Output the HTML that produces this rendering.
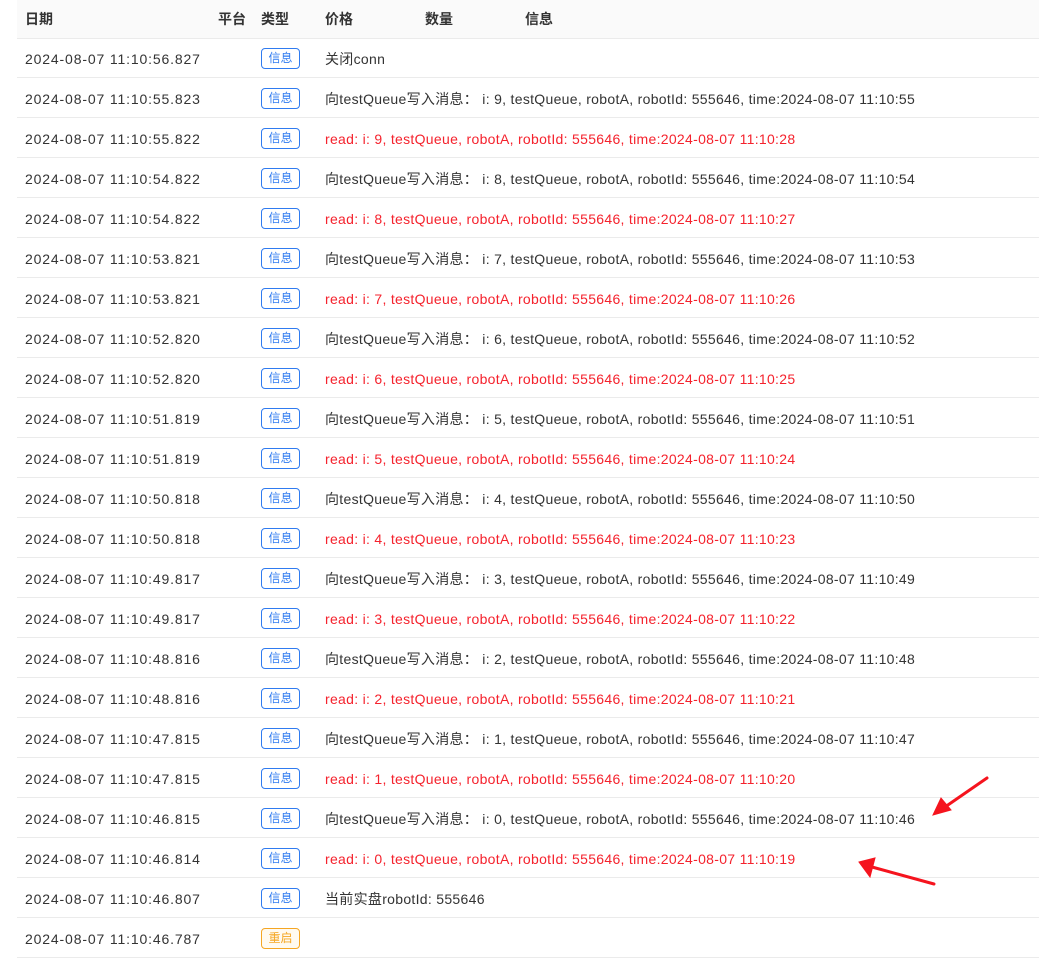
<!DOCTYPE html>
<html><head><meta charset="utf-8"><style>
body{margin:0;width:1039px;height:962px;background:#fff;font-family:"Liberation Sans","Noto Sans CJK SC",sans-serif;font-size:14px;color:#333;position:relative;overflow:hidden}
.hd{position:absolute;left:17px;top:0;width:1022px;height:38px;background:#fafafa;border-bottom:1px solid #ebebeb;font-weight:bold;color:#333}
.hd span{position:absolute;top:0;line-height:38px}
.row{position:absolute;left:17px;width:1022px;height:39px;border-bottom:1px solid #ebebeb}
.d{position:absolute;left:8px;top:2px;line-height:39px;height:39px;color:#333;letter-spacing:0.85px}
.t{position:absolute;left:244px;top:10px;width:37px;height:19px;border:1px solid #2f7bf0;border-radius:4px;color:#2f7bf0;font-size:12px;text-align:center;line-height:19px}
.t.o{border-color:#f5a623;color:#f5a623;background:#fffaf0}
.m{position:absolute;left:308px;top:2px;line-height:39px;height:39px;white-space:pre;letter-spacing:0.3px}
.r{color:#f5222d}
</style></head><body>
<div class="hd"><span style="left:8px">日期</span><span style="left:201px">平台</span><span style="left:244px">类型</span><span style="left:308px">价格</span><span style="left:408px">数量</span><span style="left:508px">信息</span></div>
<div class="row" style="top:38px"><span class="d">2024-08-07 11:10:56.827</span><span class="t">信息</span><span class="m">关闭conn</span></div>
<div class="row" style="top:78px"><span class="d">2024-08-07 11:10:55.823</span><span class="t">信息</span><span class="m">向testQueue写入消息： i: 9, testQueue, robotA, robotId: 555646, time:2024-08-07 11:10:55</span></div>
<div class="row" style="top:118px"><span class="d">2024-08-07 11:10:55.822</span><span class="t">信息</span><span class="m r">read: i: 9, testQueue, robotA, robotId: 555646, time:2024-08-07 11:10:28</span></div>
<div class="row" style="top:158px"><span class="d">2024-08-07 11:10:54.822</span><span class="t">信息</span><span class="m">向testQueue写入消息： i: 8, testQueue, robotA, robotId: 555646, time:2024-08-07 11:10:54</span></div>
<div class="row" style="top:198px"><span class="d">2024-08-07 11:10:54.822</span><span class="t">信息</span><span class="m r">read: i: 8, testQueue, robotA, robotId: 555646, time:2024-08-07 11:10:27</span></div>
<div class="row" style="top:238px"><span class="d">2024-08-07 11:10:53.821</span><span class="t">信息</span><span class="m">向testQueue写入消息： i: 7, testQueue, robotA, robotId: 555646, time:2024-08-07 11:10:53</span></div>
<div class="row" style="top:278px"><span class="d">2024-08-07 11:10:53.821</span><span class="t">信息</span><span class="m r">read: i: 7, testQueue, robotA, robotId: 555646, time:2024-08-07 11:10:26</span></div>
<div class="row" style="top:318px"><span class="d">2024-08-07 11:10:52.820</span><span class="t">信息</span><span class="m">向testQueue写入消息： i: 6, testQueue, robotA, robotId: 555646, time:2024-08-07 11:10:52</span></div>
<div class="row" style="top:358px"><span class="d">2024-08-07 11:10:52.820</span><span class="t">信息</span><span class="m r">read: i: 6, testQueue, robotA, robotId: 555646, time:2024-08-07 11:10:25</span></div>
<div class="row" style="top:398px"><span class="d">2024-08-07 11:10:51.819</span><span class="t">信息</span><span class="m">向testQueue写入消息： i: 5, testQueue, robotA, robotId: 555646, time:2024-08-07 11:10:51</span></div>
<div class="row" style="top:438px"><span class="d">2024-08-07 11:10:51.819</span><span class="t">信息</span><span class="m r">read: i: 5, testQueue, robotA, robotId: 555646, time:2024-08-07 11:10:24</span></div>
<div class="row" style="top:478px"><span class="d">2024-08-07 11:10:50.818</span><span class="t">信息</span><span class="m">向testQueue写入消息： i: 4, testQueue, robotA, robotId: 555646, time:2024-08-07 11:10:50</span></div>
<div class="row" style="top:518px"><span class="d">2024-08-07 11:10:50.818</span><span class="t">信息</span><span class="m r">read: i: 4, testQueue, robotA, robotId: 555646, time:2024-08-07 11:10:23</span></div>
<div class="row" style="top:558px"><span class="d">2024-08-07 11:10:49.817</span><span class="t">信息</span><span class="m">向testQueue写入消息： i: 3, testQueue, robotA, robotId: 555646, time:2024-08-07 11:10:49</span></div>
<div class="row" style="top:598px"><span class="d">2024-08-07 11:10:49.817</span><span class="t">信息</span><span class="m r">read: i: 3, testQueue, robotA, robotId: 555646, time:2024-08-07 11:10:22</span></div>
<div class="row" style="top:638px"><span class="d">2024-08-07 11:10:48.816</span><span class="t">信息</span><span class="m">向testQueue写入消息： i: 2, testQueue, robotA, robotId: 555646, time:2024-08-07 11:10:48</span></div>
<div class="row" style="top:678px"><span class="d">2024-08-07 11:10:48.816</span><span class="t">信息</span><span class="m r">read: i: 2, testQueue, robotA, robotId: 555646, time:2024-08-07 11:10:21</span></div>
<div class="row" style="top:718px"><span class="d">2024-08-07 11:10:47.815</span><span class="t">信息</span><span class="m">向testQueue写入消息： i: 1, testQueue, robotA, robotId: 555646, time:2024-08-07 11:10:47</span></div>
<div class="row" style="top:758px"><span class="d">2024-08-07 11:10:47.815</span><span class="t">信息</span><span class="m r">read: i: 1, testQueue, robotA, robotId: 555646, time:2024-08-07 11:10:20</span></div>
<div class="row" style="top:798px"><span class="d">2024-08-07 11:10:46.815</span><span class="t">信息</span><span class="m">向testQueue写入消息： i: 0, testQueue, robotA, robotId: 555646, time:2024-08-07 11:10:46</span></div>
<div class="row" style="top:838px"><span class="d">2024-08-07 11:10:46.814</span><span class="t">信息</span><span class="m r">read: i: 0, testQueue, robotA, robotId: 555646, time:2024-08-07 11:10:19</span></div>
<div class="row" style="top:878px"><span class="d">2024-08-07 11:10:46.807</span><span class="t">信息</span><span class="m">当前实盘robotId: 555646</span></div>
<div class="row" style="top:918px"><span class="d">2024-08-07 11:10:46.787</span><span class="t o">重启</span></div>
<svg style="position:absolute;left:0;top:0" width="1039" height="962">
<g fill="#f5141e" stroke="#f5141e" stroke-linecap="round">
<line x1="987" y1="778" x2="945" y2="807" stroke-width="3"/>
<polygon points="933,815 941,798 951,810" stroke-width="1"/>
<line x1="934" y1="884" x2="872" y2="867" stroke-width="3"/>
<polygon points="859,862 875,858 870,877" stroke-width="1"/>
</g></svg>
</body></html>
